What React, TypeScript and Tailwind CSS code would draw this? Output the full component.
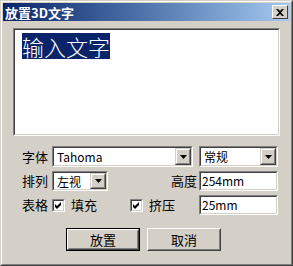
import React from 'react';

const FONT = '"Noto Sans CJK SC", "Liberation Sans", sans-serif';

// 3D 凹陷边框 (输入框 / 文本区)
function Sunken({ className = '', children }: { className?: string; children?: React.ReactNode }) {
  return (
    <div className={`border border-t-[#808080] border-l-[#808080] border-r-white border-b-white ${className}`}>
      <div className="w-full h-full border border-t-[#404040] border-l-[#404040] border-r-[#d4d0c8] border-b-[#d4d0c8] bg-white">
        {children}
      </div>
    </div>
  );
}

// 下拉箭头按钮
function DropButton() {
  return (
    <div className="w-[16px] h-full border border-t-[#d4d0c8] border-l-[#d4d0c8] border-r-[#404040] border-b-[#404040] bg-[#d4d0c8]">
      <div className="w-full h-full border border-t-white border-l-white border-r-[#808080] border-b-[#808080] flex items-center justify-center">
        <svg width="7" height="4" viewBox="0 0 7 4">
          <path d="M0 0h7L3.5 4z" fill="#000" />
        </svg>
      </div>
    </div>
  );
}

function Select({ value, className }: { value: string; className: string }) {
  return (
    <Sunken className={className}>
      <div className="flex h-full items-stretch">
        <span className="flex-1 pl-[3px] text-[12px] leading-[17px] text-black">{value}</span>
        <DropButton />
      </div>
    </Sunken>
  );
}

function Field({ value, className }: { value: string; className: string }) {
  return (
    <Sunken className={className}>
      <span className="block pl-[1px] text-[12px] leading-[16px] text-black">{value}</span>
    </Sunken>
  );
}

function Check({ label, className = '' }: { label: string; className?: string }) {
  return (
    <div className={`flex items-center gap-[6px] ${className}`}>
      <Sunken className="w-[13px] h-[13px]">
        <svg width="9" height="9" viewBox="0 0 9 9" className="block">
          <path d="M1 3l2 2 4-4v3l-4 4-2-2z" fill="#000" />
        </svg>
      </Sunken>
      <span className="text-[13px] text-black">{label}</span>
    </div>
  );
}

function Button({ label, isDefault }: { label: string; isDefault?: boolean }) {
  return (
    <div className={`w-[74px] h-[23px] ${isDefault ? 'border border-black' : ''}`}>
      <div className="w-full h-full border border-t-white border-l-white border-r-[#404040] border-b-[#404040] bg-[#d4d0c8]">
        <div className="w-full h-full border border-t-[#d4d0c8] border-l-[#d4d0c8] border-r-[#808080] border-b-[#808080] flex items-center justify-center text-[13px] text-black">
          {label}
        </div>
      </div>
    </div>
  );
}

export default function App() {
  return (
    <div
      className="w-[293px] h-[266px] bg-[#d4d0c8] border border-t-[#d4d0c8] border-l-[#d4d0c8] border-r-[#404040] border-b-[#404040]"
      style={{ fontFamily: FONT }}
    >
      <div className="w-full h-full border border-t-white border-l-white border-r-[#808080] border-b-[#808080] p-[1px] flex flex-col">
        {/* 标题栏 */}
        <div className="h-[18px] flex items-center justify-between pl-[2px] pr-[2px] bg-gradient-to-r from-[#0a246a] to-[#a6caf0]">
          <span className="text-[13px] font-bold text-white leading-none">放置3D文字</span>
          <div className="w-[16px] h-[14px] border border-t-white border-l-white border-r-[#404040] border-b-[#404040] bg-[#d4d0c8] flex items-center justify-center">
            <svg width="8" height="7" viewBox="0 0 8 7">
              <path d="M0 0h2l2 2 2-2h2L5 3.5 8 7H6L4 5 2 7H0l3-3.5z" fill="#000" />
            </svg>
          </div>
        </div>

        {/* 内容 */}
        <div className="pl-[10px] pr-[12px] flex flex-col">
          <Sunken className="mt-[7px] w-[267px] h-[108px]">
            <div className="pl-[7px] pt-[3px]">
              <span className="inline-block bg-[#0a246a] text-white text-[22px] leading-[26px] font-light">输入文字</span>
            </div>
          </Sunken>

          <div className="mt-[10px] flex items-center h-[21px]">
            <span className="w-[39px] pl-[9px] text-[13px] text-black">字体</span>
            <Select value="Tahoma" className="w-[141px] h-[21px]" />
            <Select value="常规" className="ml-[6px] w-[79px] h-[21px]" />
          </div>

          <div className="mt-[4px] flex items-center h-[20px]">
            <span className="w-[39px] pl-[9px] text-[13px] text-black">排列</span>
            <Select value="左视" className="w-[56px] h-[20px]" />
            <span className="w-[91px] text-right pr-[2px] text-[13px] text-black">高度</span>
            <Field value="254mm" className="w-[79px] h-[20px]" />
          </div>

          <div className="mt-[4px] flex items-center h-[20px]">
            <span className="w-[39px] pl-[9px] text-[13px] text-black">表格</span>
            <Check label="填充" className="w-[78px]" />
            <Check label="挤压" className="w-[69px]" />
            <Field value="25mm" className="w-[79px] h-[20px]" />
          </div>

          <div className="mt-[13px] flex justify-center gap-[7px] pr-[4px]">
            <Button label="放置" isDefault />
            <Button label="取消" />
          </div>
        </div>
      </div>
    </div>
  );
}
